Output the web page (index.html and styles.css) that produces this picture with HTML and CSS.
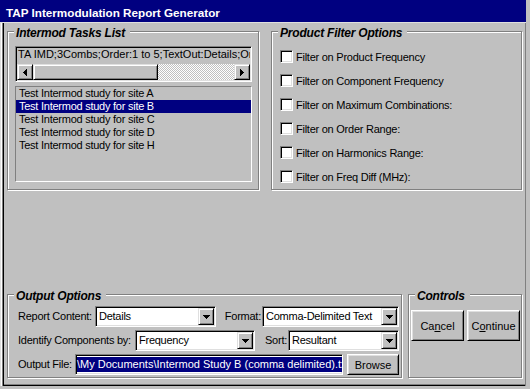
FILE: index.html
```html
<!DOCTYPE html>
<html lang="en">
<head>
    <meta charset="UTF-8">
    <title>TAP Intermodulation Report Generator</title>
    <link rel="stylesheet" href="styles.css">
</head>
<body>
    <div class="window">
        <div class="titlebar">TAP Intermodulation Report Generator</div>
        <div class="client">
            <div class="top-row">
                <fieldset class="group">
                    <legend>Intermod Tasks List</legend>
                    <div class="tasks-body">
                        <div class="taskbox">
                            <div class="task-line">TA IMD;3Combs;Order:1 to 5;TextOut:Details;Order:1 to 5</div>
                            <div class="hscroll">
                                <span class="sbtn"><svg width="4" height="7" viewBox="0 0 4 7"><path d="M3 0h1v7h-1v-1h-1v-1h-1v-1h-1v-1h1v-1h1v-1h1z"/></svg></span>
                                <span class="thumb"></span>
                                <span class="track"></span>
                                <span class="sbtn"><svg width="4" height="7" viewBox="0 0 4 7"><path d="M0 0h1v1h1v1h1v1h1v1h-1v1h-1v1h-1v1h-1z"/></svg></span>
                            </div>
                        </div>
                        <ul class="listbox">
                            <li>Test Intermod study for site A</li>
                            <li class="sel">Test Intermod study for site B</li>
                            <li>Test Intermod study for site C</li>
                            <li>Test Intermod study for site D</li>
                            <li>Test Intermod study for site H</li>
                        </ul>
                    </div>
                </fieldset>
                <fieldset class="group">
                    <legend>Product Filter Options</legend>
                    <div class="filters-body">
                        <div class="check"><span class="box"></span>Filter on Product Frequency</div>
                        <div class="check"><span class="box"></span>Filter on Component Frequency</div>
                        <div class="check"><span class="box"></span>Filter on Maximum Combinations:</div>
                        <div class="check"><span class="box"></span>Filter on Order Range:</div>
                        <div class="check"><span class="box"></span>Filter on Harmonics Range:</div>
                        <div class="check"><span class="box"></span>Filter on Freq Diff (MHz):</div>
                    </div>
                </fieldset>
            </div>
            <div class="bottom-row">
                <fieldset class="group">
                    <legend>Output Options</legend>
                    <div class="output-body">
                        <div class="orow">
                            <span class="lbl w-report">Report Content:</span>
                            <div class="combo w-details"><span class="val">Details</span><span class="drop"><svg width="7" height="4" viewBox="0 0 7 4"><path d="M0 0h7v1h-1v1h-1v1h-1v1h-1v-1h-1v-1h-1v-1h-1z"/></svg></span></div>
                            <span class="lbl right w-format">Format:</span>
                            <div class="combo w-formatbox"><span class="val">Comma-Delimited Text</span><span class="drop"><svg width="7" height="4" viewBox="0 0 7 4"><path d="M0 0h7v1h-1v1h-1v1h-1v1h-1v-1h-1v-1h-1v-1h-1z"/></svg></span></div>
                        </div>
                        <div class="orow">
                            <span class="lbl w-identify">Identify Components by:</span>
                            <div class="combo w-freq"><span class="val">Frequency</span><span class="drop"><svg width="7" height="4" viewBox="0 0 7 4"><path d="M0 0h7v1h-1v1h-1v1h-1v1h-1v-1h-1v-1h-1v-1h-1z"/></svg></span></div>
                            <span class="lbl right w-sort">Sort:</span>
                            <div class="combo w-sortbox"><span class="val">Resultant</span><span class="drop"><svg width="7" height="4" viewBox="0 0 7 4"><path d="M0 0h7v1h-1v1h-1v1h-1v1h-1v-1h-1v-1h-1v-1h-1z"/></svg></span></div>
                        </div>
                        <div class="orow">
                            <span class="lbl w-file">Output File:</span>
                            <div class="filebox"><span class="selected">\My Documents\Intermod Study B (comma delimited).txt</span></div>
                            <button class="btn browse">Browse</button>
                        </div>
                    </div>
                </fieldset>
                <fieldset class="group">
                    <legend>Controls</legend>
                    <div class="controls-body">
                        <button class="btn big">Ca<u>n</u>cel</button>
                        <button class="btn big">C<u>o</u>ntinue</button>
                    </div>
                </fieldset>
            </div>
        </div>
    </div>
</body>
</html>
```

FILE: styles.css
```css
* {
    box-sizing: border-box;
}

body {
    margin: 0;
    background-color: #c0c0c0;
    font-family: "Liberation Sans", Arial, sans-serif;
    font-size: 11px;
    letter-spacing: -0.25px;
    color: #000;
}

.window {
    width: 530px;
    height: 389px;
    display: flex;
    flex-direction: column;
    border-right: 4px solid #c0c0c0;
    border-bottom: 3px solid #c0c0c0;
}

.titlebar {
    height: 22px;
    background-color: #000080;
    color: #fff;
    font-weight: bold;
    font-size: 11.7px;
    letter-spacing: 0;
    line-height: 18px;
    padding: 4px 0 0 6px;
    white-space: nowrap;
}

.client {
    flex: 1;
    display: flex;
    flex-direction: column;
    justify-content: space-between;
    border-top: 1px solid #dfdfdf;
    padding: 0 4px 8px 7px;
    box-shadow: inset 1px 0 #dfdfdf, inset 2px 0 #fff, inset 3px 0 #808080, inset 4px 0 #000,
        inset -1px 0 #808080, inset 0 -1px #000, inset 0 -2px #808080;
}

.top-row {
    display: grid;
    grid-template-columns: 252px 251px;
    column-gap: 12px;
}

.bottom-row {
    display: grid;
    grid-template-columns: 395px 114px;
    column-gap: 6px;
}

/* etched group box */
.group {
    margin: 0;
    padding: 0;
    min-width: 0;
    border: 1px solid #808080;
    box-shadow: 1px 1px 0 #fff, inset 1px 1px 0 #fff;
}

.group legend {
    margin-left: 6px;
    padding: 4px 5px 0 2px;
    background-color: #c0c0c0;
    font-size: 12px;
    font-weight: bold;
    font-style: italic;
    letter-spacing: -0.2px;
    line-height: 13px;
}

/* bevels */
.taskbox, .combo, .filebox, .box {
    border: 1px solid;
    border-color: #808080 #fff #fff #808080;
    box-shadow: inset 1px 1px 0 #000, inset -1px -1px 0 #dfdfdf;
    padding: 1px;
}

.sbtn, .thumb, .drop {
    border: 1px solid;
    border-color: #dfdfdf #000 #000 #dfdfdf;
    box-shadow: inset 1px 1px 0 #fff, inset -1px -1px 0 #808080;
    background-color: #c0c0c0;
}

.btn {
    font: inherit;
    color: #000;
    margin: 0;
    padding: 0;
    background-color: #c0c0c0;
    border: 1px solid;
    border-color: #fff #000 #000 #fff;
    box-shadow: inset 1px 1px 0 #dfdfdf, inset -1px -1px 0 #808080;
}

/* tasks list */
.tasks-body {
    padding: 6px 6px 7px 7px;
}

.taskbox {
    height: 36px;
}

.task-line {
    height: 16px;
    line-height: 12px;
    padding-left: 1px;
    letter-spacing: 0;
    white-space: nowrap;
    overflow: hidden;
}

.hscroll {
    display: flex;
    height: 16px;
}

.sbtn {
    width: 16px;
    display: flex;
    align-items: center;
    justify-content: center;
}

.thumb {
    width: 125px;
}

.track {
    flex: 1;
    background: repeating-conic-gradient(#fff 0 25%, #c0c0c0 0 50%) 0 0 / 2px 2px;
}

.listbox {
    list-style: none;
    margin: 4px 0 0;
    padding: 0;
    height: 96px;
    border: 1px solid;
    border-color: #808080 #fff #fff #808080;
}

.listbox li {
    height: 13px;
    line-height: 13px;
    padding-left: 3px;
    white-space: nowrap;
}

.listbox li.sel {
    background-color: #000080;
    color: #fff;
}

/* filters */
.filters-body {
    padding: 10px 0 0 8px;
    display: flex;
    flex-direction: column;
    gap: 10px;
}

.check {
    display: flex;
    align-items: flex-start;
    gap: 3px;
    height: 14px;
    line-height: 14px;
    white-space: nowrap;
}

.box {
    width: 13px;
    height: 13px;
    background-color: #fff;
}

/* output options */
.output-body {
    padding: 3px 0 2px 10px;
    display: flex;
    flex-direction: column;
    gap: 3px;
}

.orow {
    display: flex;
    align-items: center;
    height: 21px;
}

.lbl {
    white-space: nowrap;
    line-height: 21px;
}

.lbl.right {
    text-align: right;
    padding-right: 1px;
}

.w-report { width: 77px; }
.w-format { width: 46px; }
.w-identify { width: 117px; }
.w-sort { width: 33px; }
.w-file { width: 57px; }

.combo {
    height: 21px;
    display: flex;
    background-color: #fff;
}

.w-details { width: 121px; }
.w-formatbox { width: 137px; }
.w-freq { width: 120px; }
.w-sortbox { width: 111px; }

.combo .val {
    flex: 1;
    padding-left: 2px;
    line-height: 17px;
    white-space: nowrap;
    overflow: hidden;
}

.drop {
    width: 16px;
    height: 17px;
    display: flex;
    align-items: center;
    justify-content: center;
}

.filebox {
    width: 268px;
    height: 21px;
    background-color: #fff;
    padding: 2px 1px;
    overflow: hidden;
    white-space: nowrap;
}

.selected {
    display: inline-block;
    background-color: #000080;
    color: #fff;
    letter-spacing: 0;
    line-height: 15px;
}

.browse {
    width: 52px;
    height: 21px;
    margin-left: 4px;
}

/* controls */
.controls-body {
    padding: 7px 0 0 2px;
    display: flex;
    gap: 3px;
}

.big {
    width: 53px;
    height: 31px;
}
```
